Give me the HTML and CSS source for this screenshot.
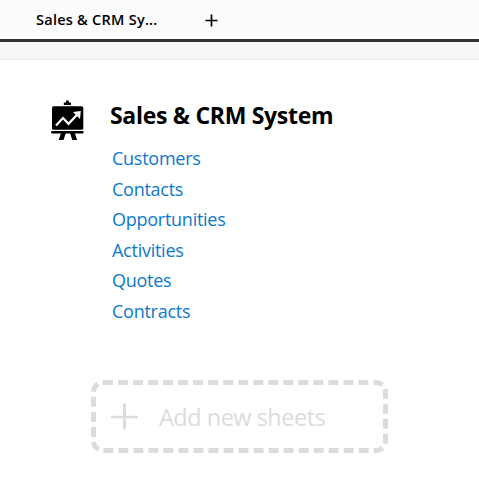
FILE: index.html
```
<!DOCTYPE html>
<html lang="en">
<head>
    <meta charset="UTF-8">
    <meta name="viewport" content="width=device-width, initial-scale=1.0">
    <title>Sales &amp; CRM System</title>
    <link rel="stylesheet" href="styles.css">
</head>
<body>
    <nav class="tabs">
        <div class="tab">Sales &amp; CRM Sy...</div>
        <svg class="tab-add" width="13" height="13" viewBox="0 0 13 13">
            <path d="M6.5 0.5v12M0.5 6.5h12" stroke="#000" stroke-width="1.7"/>
        </svg>
    </nav>
    <div class="toolbar"></div>
    <main class="content">
        <section class="group">
            <svg class="group-icon" width="36" height="42" viewBox="0 0 36 42">
                <path d="M13.8 4.9V2.6h2.2V1.5q0-1.3 1.4-1.3t1.4 1.3v1.1H21v2.3z"/>
                <rect x="2" y="6.2" width="31.3" height="23.6" rx="1.6"/>
                <rect x="1.2" y="31" width="32.4" height="2.4" rx="0.8"/>
                <path d="M11 33h4.8l-2.3 7H8.7zM20 33h4.8l2.3 7h-4.8z"/>
                <path d="M6 25.5l7-7.5 5.5 5.8 9-9.5" fill="none" stroke="#fff" stroke-width="2.2"/>
                <path d="M23 12l7.8-.9-.8 7.8z" fill="#fff"/>
            </svg>
            <div class="group-body">
                <h1 class="group-title">Sales &amp; CRM System</h1>
                <ul class="sheets">
                    <li><a href="#">Customers</a></li>
                    <li><a href="#">Contacts</a></li>
                    <li><a href="#">Opportunities</a></li>
                    <li><a href="#">Activities</a></li>
                    <li><a href="#">Quotes</a></li>
                    <li><a href="#">Contracts</a></li>
                </ul>
            </div>
        </section>
        <div class="add-sheets">
            <svg width="27" height="27" viewBox="0 0 27 27">
                <path d="M13.5 0.5v26" stroke="#dcdcdc" stroke-width="3"/>
                <path d="M0 14h27" stroke="#dcdcdc" stroke-width="2.4"/>
            </svg>
            <span>Add new sheets</span>
        </div>
    </main>
</body>
</html>
```
FILE: styles.css
```
* {
    box-sizing: border-box;
}
body {
    margin: 0;
    background-color: #fff;
    color: #000;
    font-family: "Open Sans", sans-serif;
}
.tabs {
    display: flex;
    align-items: center;
    height: 42px;
    padding-left: 36px;
    border-bottom: 3px solid #333;
    background-color: #fcfcfc;
}
.tab {
    width: 169px;
    font-size: 14.5px;
    font-weight: 600;
    letter-spacing: 0.25px;
    line-height: 20px;
}
.tab-add {
    margin-top: 2px;
}
.toolbar {
    height: 18px;
    border-bottom: 1px solid #eee;
    background-color: #f7f7f7;
}
.content {
    padding: 40px 0 0 50px;
}
.group {
    display: flex;
}
.group-icon {
    flex: none;
}
.group-body {
    margin-left: 24px;
}
.group-title {
    margin: 0;
    font-size: 23px;
    font-weight: 700;
    letter-spacing: -0.3px;
    line-height: 30px;
}
.sheets {
    margin: 13px 0 0 2px;
    padding: 0;
    list-style: none;
    font-size: 18px;
    letter-spacing: -0.26px;
    line-height: 30.5px;
}
.sheets a {
    color: #0d79ca;
    text-decoration: none;
}
.add-sheets {
    display: flex;
    align-items: center;
    width: 297px;
    height: 73px;
    margin: 54px 0 0 41px;
    padding-left: 15px;
    border: 5px dashed #dcdcdc;
    border-radius: 12px;
    color: #dcdcdc;
    font-size: 23.5px;
    letter-spacing: -0.5px;
}
.add-sheets span {
    margin-left: 21px;
}
```
